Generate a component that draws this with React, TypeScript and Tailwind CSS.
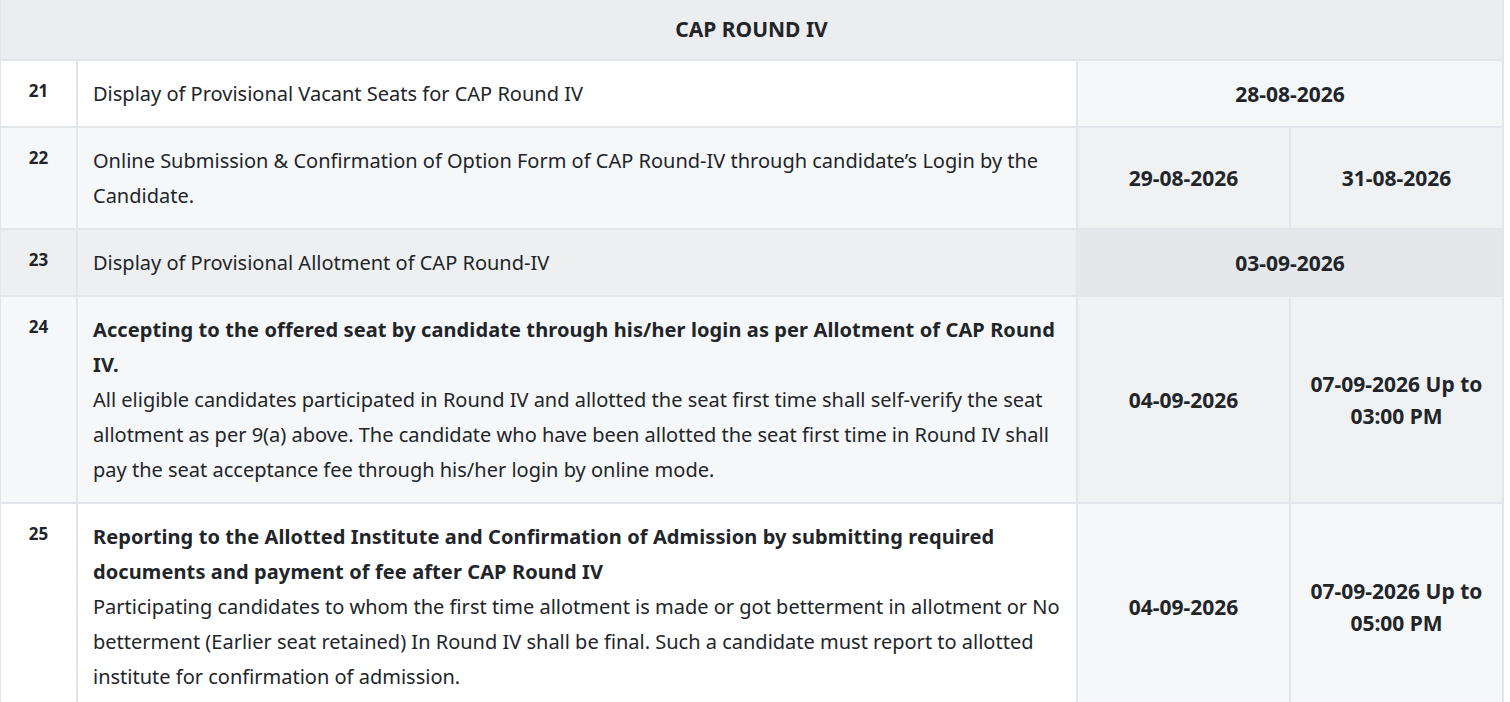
const font = { fontFamily: '"Noto Sans", "Open Sans", sans-serif' };

type Row = {
  no: number;
  title?: string[];
  lines: string[];
  d1: string[];
  d2?: string[];
  rowBg: string;
  dateBg: string;
};

const rows: Row[] = [
  {
    no: 21,
    lines: ["Display of Provisional Vacant Seats for CAP Round IV"],
    d1: ["28-08-2026"],
    rowBg: "bg-white",
    dateBg: "bg-[#f5f6f8]",
  },
  {
    no: 22,
    lines: [
      "Online Submission & Confirmation of Option Form of CAP Round-IV through candidate’s Login by the",
      "Candidate.",
    ],
    d1: ["29-08-2026"],
    d2: ["31-08-2026"],
    rowBg: "bg-[#f6f7f9]",
    dateBg: "bg-[#eff1f3]",
  },
  {
    no: 23,
    lines: ["Display of Provisional Allotment of CAP Round-IV"],
    d1: ["03-09-2026"],
    rowBg: "bg-[#eeeff1]",
    dateBg: "bg-[#e5e8eb]",
  },
  {
    no: 24,
    title: [
      "Accepting to the offered seat by candidate through his/her login as per Allotment of CAP Round",
      "IV.",
    ],
    lines: [
      "All eligible candidates participated in Round IV and allotted the seat first time shall self-verify the seat",
      "allotment as per 9(a) above. The candidate who have been allotted the seat first time in Round IV shall",
      "pay the seat acceptance fee through his/her login by online mode.",
    ],
    d1: ["04-09-2026"],
    d2: ["07-09-2026 Up to", "03:00 PM"],
    rowBg: "bg-[#f6f7f9]",
    dateBg: "bg-[#eff1f3]",
  },
  {
    no: 25,
    title: [
      "Reporting to the Allotted Institute and Confirmation of Admission by submitting required",
      "documents and payment of fee after CAP Round IV",
    ],
    lines: [
      "Participating candidates to whom the first time allotment is made or got betterment in allotment or No",
      "betterment (Earlier seat retained) In Round IV shall be final. Such a candidate must report to allotted",
      "institute for confirmation of admission.",
    ],
    d1: ["04-09-2026"],
    d2: ["07-09-2026 Up to", "05:00 PM"],
    rowBg: "bg-white",
    dateBg: "bg-[#f5f6f8]",
  },
];

function DateCell({ lines, bg, span }: { lines: string[]; bg: string; span?: number }) {
  return (
    <td
      colSpan={span}
      className={`${bg} border-2 border-[#e2e5e9] px-3 py-[15px] text-center align-middle text-[21px] font-bold leading-[32px]`}
    >
      {lines.map((l) => (
        <div key={l} className="whitespace-nowrap">
          {l}
        </div>
      ))}
    </td>
  );
}

export default function App() {
  return (
    <div className="min-h-screen bg-white text-[#212529]" style={font}>
      <table className="w-[1503px] -ml-[1px] -mt-[2px] border-collapse table-fixed">
        <colgroup>
          <col className="w-[77px]" />
          <col className="w-[1000px]" />
          <col className="w-[213px]" />
          <col className="w-[213px]" />
        </colgroup>
        <thead>
          <tr>
            <th
              colSpan={4}
              className="bg-[#ecedf0] border-2 border-[#e2e5e9] pt-[15px] pb-[16px] text-center text-[21px] font-bold leading-[28px]"
            >
              CAP ROUND IV
            </th>
          </tr>
        </thead>
        <tbody>
          {rows.map((r) => (
            <tr key={r.no} className={r.rowBg}>
              <td className="border-2 border-[#e2e5e9] pt-[17px] pb-[14px] text-center align-top text-[17px] font-bold leading-[26px]">
                {r.no}
              </td>
              <td className="border-2 border-[#e2e5e9] pl-[15px] pr-2 py-[15px] align-top text-[20px] leading-[35px]">
                {r.title?.map((l) => (
                  <div key={l} className="whitespace-nowrap font-bold tracking-[0.1px]">
                    {l}
                  </div>
                ))}
                {r.lines.map((l) => (
                  <div key={l} className="whitespace-nowrap">
                    {l}
                  </div>
                ))}
              </td>
              {r.d2 ? (
                <>
                  <DateCell lines={r.d1} bg={r.dateBg} />
                  <DateCell lines={r.d2} bg={r.dateBg} />
                </>
              ) : (
                <DateCell lines={r.d1} bg={r.dateBg} span={2} />
              )}
            </tr>
          ))}
        </tbody>
      </table>
    </div>
  );
}
